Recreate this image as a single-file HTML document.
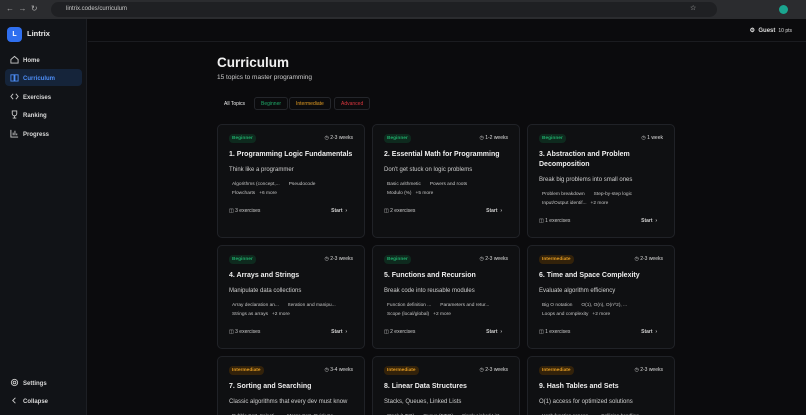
<!DOCTYPE html>
<html><head><meta charset="utf-8">
<style>
*{box-sizing:border-box;margin:0;padding:0}
html,body{width:806px;height:415px;overflow:hidden}
body{background:#0b0b0d;font-family:"Liberation Sans",sans-serif;color:#e6e6e6;position:relative}
.chrome{position:absolute;left:0;top:0;width:806px;height:19px;background:#2b2c2f}
.url{position:absolute;left:51px;top:2px;width:666px;height:15px;border-radius:8px;background:#1f2023;color:#c8c8c8;font-size:6px;line-height:15px;padding-left:15px}
.side{position:absolute;left:0;top:19px;width:87px;height:396px;background:#111317;border-right:1px solid #1d1f24}
.logo{position:absolute;left:7px;top:8px;width:15px;height:15px;border-radius:4px;background:#2f6fef;color:#fff;font-size:7px;font-weight:bold;text-align:center;line-height:15px}
.brand{position:absolute;left:27px;top:10px;font-size:7.5px;font-weight:bold;color:#eee}
.nav{position:absolute;left:5px;width:77px;height:17px;border-radius:4px;font-size:6px;font-weight:bold;color:#d8d8d8;line-height:17px;padding-left:18px}
.nav span{position:relative;top:2px}
.nav svg{position:absolute;left:5px;top:4px}
.nav.act{background:#15243a;color:#4d8ef7}
.hdr{position:absolute;left:88px;top:19px;right:0;height:23px;border-bottom:1px solid #1b1c20}
.guest{position:absolute;right:14px;top:27px;font-size:6px;font-weight:bold;color:#ddd}
.guest span{font-weight:normal;font-size:5px;margin-left:3px}
h1{position:absolute;left:217px;top:55px;font-size:13.5px;font-weight:bold;color:#f0f0f0}
.subt{position:absolute;left:217px;top:74px;font-size:6.5px;color:#ccc}
.filt{position:absolute;top:97px;height:13px;font-size:5px;line-height:12px;padding:0 6px;border:1px solid #24262b;border-radius:3px}
.card{position:absolute;width:148px;border:1px solid #202227;border-radius:5px;background:#0f1012;padding:9px 11px 0 11px;overflow:hidden}
.badge{display:block;width:max-content;height:9px;font-size:4.8px;font-weight:bold;line-height:9px;padding:0 3px;border-radius:4px}
.bg{background:#0e2a1e;color:#1fa868}
.bi{background:#33220a;color:#e09a22}
.dur{position:absolute;right:11px;top:10px;font-size:5px;line-height:7px;color:#ddd}
.t{margin-top:7px;font-size:7px;font-weight:bold;line-height:10px;color:#eee}
.s{margin-top:5px;font-size:6px;line-height:10px;color:#cfcfcf}
.tags{margin-top:5px;font-size:4.8px;line-height:9px;color:#c6c6c6;padding-left:3px;white-space:nowrap}
.tags span{margin-right:9px}
.ft{margin-top:8px;font-size:5px;line-height:10px;color:#ccc;position:relative}
.ft b{position:absolute;right:6px;top:0;font-weight:bold}
</style></head><body>
<div class="chrome"><div style="position:absolute;left:6px;top:4px;font-size:8px;color:#aaa">←&nbsp;&nbsp;→&nbsp;&nbsp;↻</div><div class="url">lintrix.codes/curriculum</div>
<div style="position:absolute;left:690px;top:4px;font-size:7px;color:#bbb">☆</div>
<div style="position:absolute;left:779px;top:5px;width:9px;height:9px;border-radius:50%;background:#1aa58f"></div></div>
<div class="side">
<div class="logo">L</div><div class="brand">Lintrix</div>
<div class="nav" style="top:32px"><svg width="9" height="9" viewBox="0 0 10 10" fill="none" stroke="#ccc" stroke-width="1"><path d="M1 5L5 1.5 9 5V9H1Z"/></svg><span>Home</span></div>
<div class="nav act" style="top:50px"><svg width="9" height="9" viewBox="0 0 10 10" fill="none" stroke="#4d8ef7" stroke-width="1"><path d="M1 2h3.5v7H1zM5.5 2H9v7H5.5z"/></svg><span>Curriculum</span></div>
<div class="nav" style="top:69px"><svg width="9" height="9" viewBox="0 0 10 10" fill="none" stroke="#ccc" stroke-width="1"><path d="M3.5 2L1 5l2.5 3M6.5 2L9 5 6.5 8"/></svg><span>Exercises</span></div>
<div class="nav" style="top:87px"><svg width="9" height="9" viewBox="0 0 10 10" fill="none" stroke="#ccc" stroke-width="1"><path d="M2.5 1h5v3a2.5 2.5 0 0 1-5 0zM5 6.5V9M3 9h4"/></svg><span>Ranking</span></div>
<div class="nav" style="top:106px"><svg width="9" height="9" viewBox="0 0 10 10" fill="none" stroke="#ccc" stroke-width="1"><path d="M1 1v8h8M3.5 7V4M5.5 7V2M7.5 7V5"/></svg><span>Progress</span></div>
<div class="nav" style="top:355px"><svg width="9" height="9" viewBox="0 0 10 10" fill="none" stroke="#ccc" stroke-width="1"><circle cx="5" cy="5" r="1.5"/><circle cx="5" cy="5" r="3.5"/></svg><span>Settings</span></div>
<div class="nav" style="top:373px"><svg width="9" height="9" viewBox="0 0 10 10" fill="none" stroke="#ccc" stroke-width="1"><path d="M6 2L3 5l3 3"/></svg><span>Collapse</span></div>
</div>
<div class="hdr"></div>
<div class="guest">⚙&nbsp;&nbsp;Guest<span>10 pts</span></div>
<h1>Curriculum</h1>
<div class="subt">15 topics to master programming</div>
<div class="filt" style="left:217px;border-color:transparent;color:#eee">All Topics</div>
<div class="filt" style="left:254px;color:#1fa868">Beginner</div>
<div class="filt" style="left:289px;color:#e09a22">Intermediate</div>
<div class="filt" style="left:334px;color:#d9363e">Advanced</div>

<div class="card" style="left:217px;top:124px;height:114px"><span class="badge bg">Beginner</span><div class="dur">◷ 2-3 weeks</div><div class="t">1. Programming Logic Fundamentals</div><div class="s">Think like a programmer</div><div class="tags"><span>Algorithms (concept,...</span><span>Pseudocode</span><br><span style="margin-right:4px">Flowcharts</span>+6 more</div><div class="ft">◫ 3 exercises<b>Start &nbsp;›</b></div></div>
<div class="card" style="left:372px;top:124px;height:114px"><span class="badge bg">Beginner</span><div class="dur">◷ 1-2 weeks</div><div class="t">2. Essential Math for Programming</div><div class="s">Don't get stuck on logic problems</div><div class="tags"><span>Basic arithmetic</span><span>Powers and roots</span><br><span style="margin-right:4px">Modulo (%)</span>+5 more</div><div class="ft">◫ 2 exercises<b>Start &nbsp;›</b></div></div>
<div class="card" style="left:527px;top:124px;height:114px"><span class="badge bg">Beginner</span><div class="dur">◷ 1 week</div><div class="t">3. Abstraction and Problem Decomposition</div><div class="s">Break big problems into small ones</div><div class="tags"><span>Problem breakdown</span><span>Step-by-step logic</span><br><span style="margin-right:4px">Input/Output identif...</span>+2 more</div><div class="ft">◫ 1 exercises<b>Start &nbsp;›</b></div></div>

<div class="card" style="left:217px;top:245px;height:104px"><span class="badge bg">Beginner</span><div class="dur">◷ 2-3 weeks</div><div class="t">4. Arrays and Strings</div><div class="s">Manipulate data collections</div><div class="tags"><span>Array declaration an...</span><span>Iteration and manipu...</span><br><span style="margin-right:4px">Strings as arrays</span>+2 more</div><div class="ft">◫ 3 exercises<b>Start &nbsp;›</b></div></div>
<div class="card" style="left:372px;top:245px;height:104px"><span class="badge bg">Beginner</span><div class="dur">◷ 2-3 weeks</div><div class="t">5. Functions and Recursion</div><div class="s">Break code into reusable modules</div><div class="tags"><span>Function definition ...</span><span>Parameters and retur...</span><br><span style="margin-right:4px">Scope (local/global)</span>+2 more</div><div class="ft">◫ 2 exercises<b>Start &nbsp;›</b></div></div>
<div class="card" style="left:527px;top:245px;height:104px"><span class="badge bi">Intermediate</span><div class="dur">◷ 2-3 weeks</div><div class="t">6. Time and Space Complexity</div><div class="s">Evaluate algorithm efficiency</div><div class="tags"><span>Big O notation</span><span>O(1), O(n), O(n^2), ...</span><br><span style="margin-right:4px">Loops and complexity</span>+2 more</div><div class="ft">◫ 1 exercises<b>Start &nbsp;›</b></div></div>

<div class="card" style="left:217px;top:356px;height:59px;border-bottom:0;border-radius:5px 5px 0 0"><span class="badge bi">Intermediate</span><div class="dur">◷ 3-4 weeks</div><div class="t">7. Sorting and Searching</div><div class="s">Classic algorithms that every dev must know</div><div class="tags"><span>Bubble Sort, Selecti...</span><span>Merge Sort, Quick So...</span></div></div>
<div class="card" style="left:372px;top:356px;height:59px;border-bottom:0;border-radius:5px 5px 0 0"><span class="badge bi">Intermediate</span><div class="dur">◷ 2-3 weeks</div><div class="t">8. Linear Data Structures</div><div class="s">Stacks, Queues, Linked Lists</div><div class="tags"><span>Stack (LIFO)</span><span>Queue (FIFO)</span><span>Singly Linked List</span></div></div>
<div class="card" style="left:527px;top:356px;height:59px;border-bottom:0;border-radius:5px 5px 0 0"><span class="badge bi">Intermediate</span><div class="dur">◷ 2-3 weeks</div><div class="t">9. Hash Tables and Sets</div><div class="s">O(1) access for optimized solutions</div><div class="tags"><span>Hash function concep...</span><span>Collision handling</span></div></div>
</body></html>
